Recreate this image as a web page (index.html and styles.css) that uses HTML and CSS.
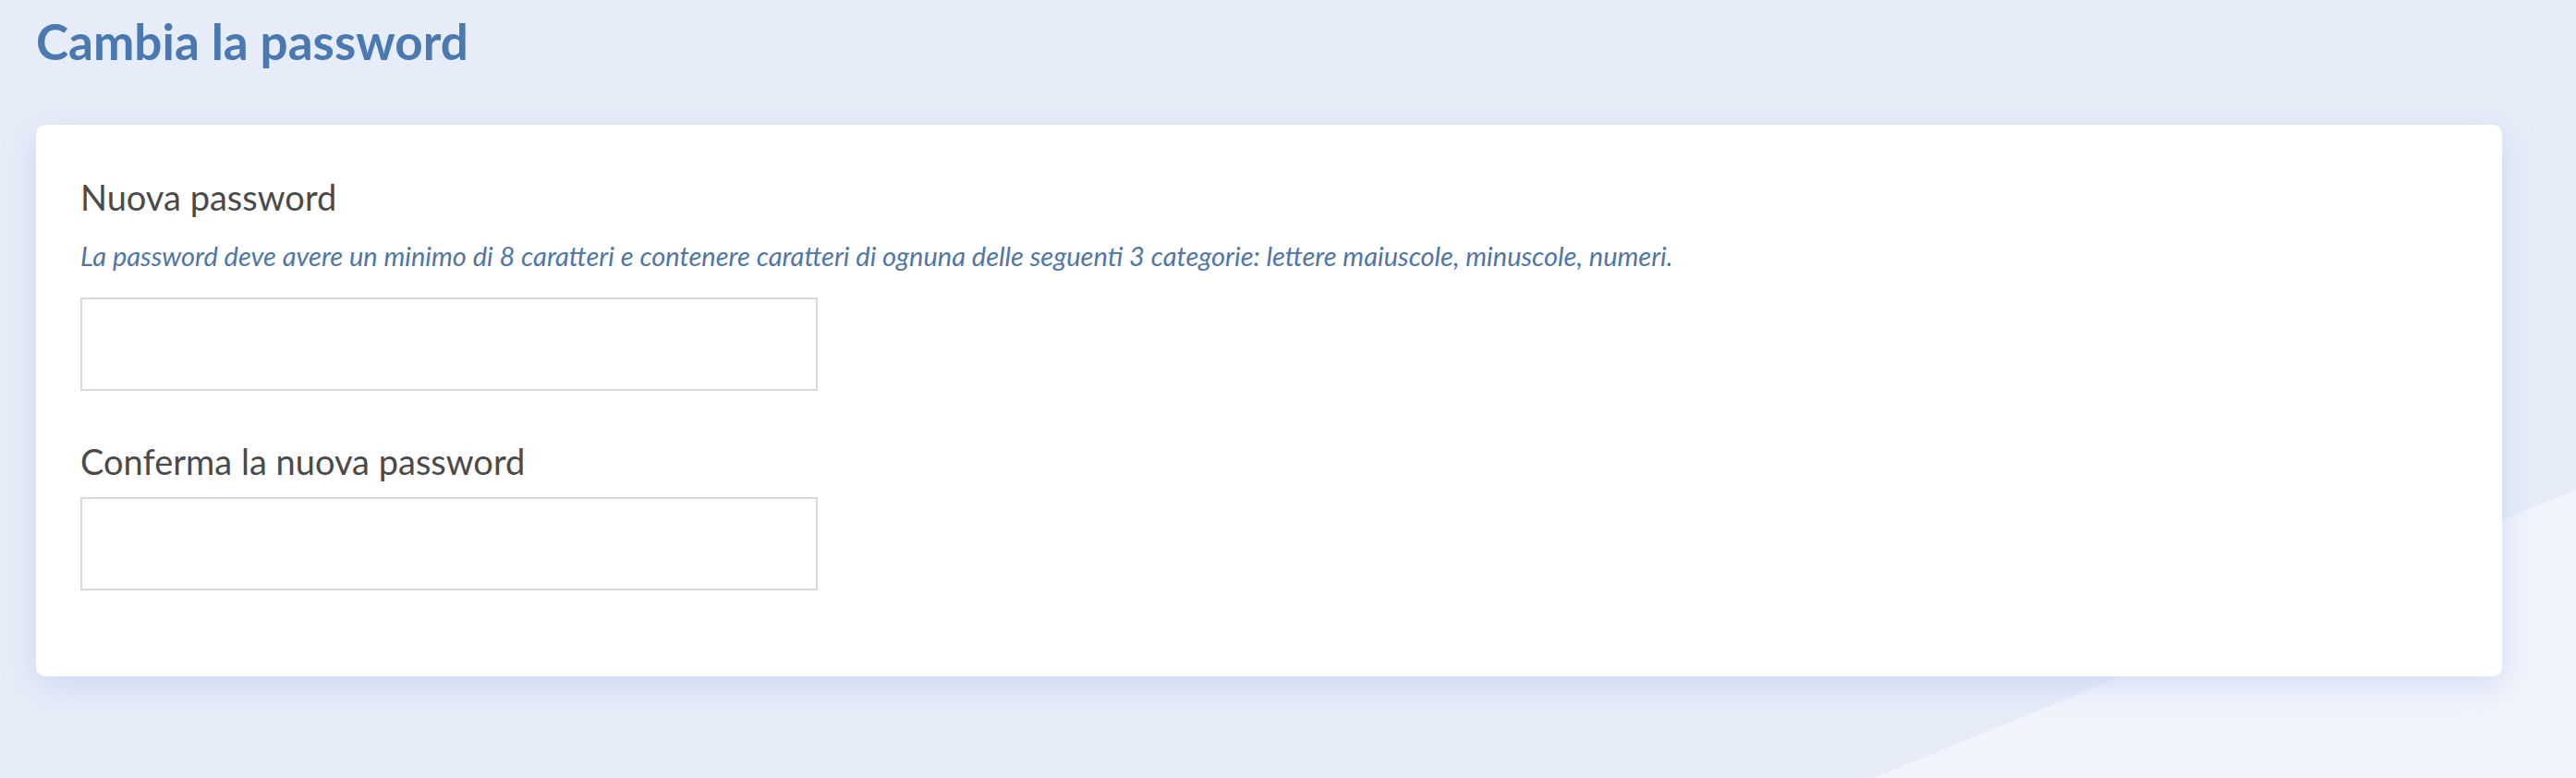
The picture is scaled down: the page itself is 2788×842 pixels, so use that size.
FILE: index.html
```html
<!DOCTYPE html>
<html lang="it">
  <head>
    <meta charset="UTF-8" />
    <meta name="viewport" content="width=device-width, initial-scale=1.0" />
    <title>Cambia la password</title>
    <link rel="stylesheet" href="styles.css">
  </head>
  <body>
    <div class="page">
      <h1 class="page-title">Cambia la password</h1>

      <form class="card" id="passwordForm">
        <div class="form-group">
          <label for="newPassword">Nuova password</label>
          <p class="hint">
            La password deve avere un minimo di 8 caratteri e contenere caratteri di ognuna delle seguenti 3 categorie: lettere maiuscole, minuscole, numeri.
          </p>
          <input type="password" id="newPassword" name="newPassword" />
        </div>

        <div class="form-group">
          <label for="confirmPassword">Conferma la nuova password</label>
          <input type="password" id="confirmPassword" name="confirmPassword" />
        </div>
      </form>
    </div>
  </body>
</html>
```

FILE: styles.css
```css
html,
body {
  height: 100%;
}
body {
  margin: 0;
  font-family: Lato, "Open Sans", sans-serif;
  background: linear-gradient(157.7deg, #e6edf8 84.3%, #f0f4fc 84.3%);
}
.page {
  padding: 10px 80px 0 39px;
}
.page-title {
  margin: 0 0 55px;
  font-size: 53px;
  line-height: 70px;
  font-weight: 700;
  color: #4a78b1;
}
.card {
  background: #fff;
  border-radius: 10px;
  box-shadow: 0 10px 34px rgba(170, 188, 235, 0.4);
  padding: 54px 48px 93px;
}
.form-group {
  margin-bottom: 52px;
}
.form-group:last-child {
  margin-bottom: 0;
}
label {
  display: block;
  font-size: 38px;
  line-height: 48px;
  color: #4a4a4a;
  margin-bottom: 15px;
}
.hint {
  margin: 22px 0 27px;
  font-size: 29px;
  line-height: 36px;
  font-style: italic;
  color: #4f76a4;
}
input {
  display: block;
  width: 798px;
  height: 101px;
  box-sizing: border-box;
  border: 2px solid #d5d9e0;
  background: #fff;
  font-size: 28px;
  padding: 0 16px;
}
```
